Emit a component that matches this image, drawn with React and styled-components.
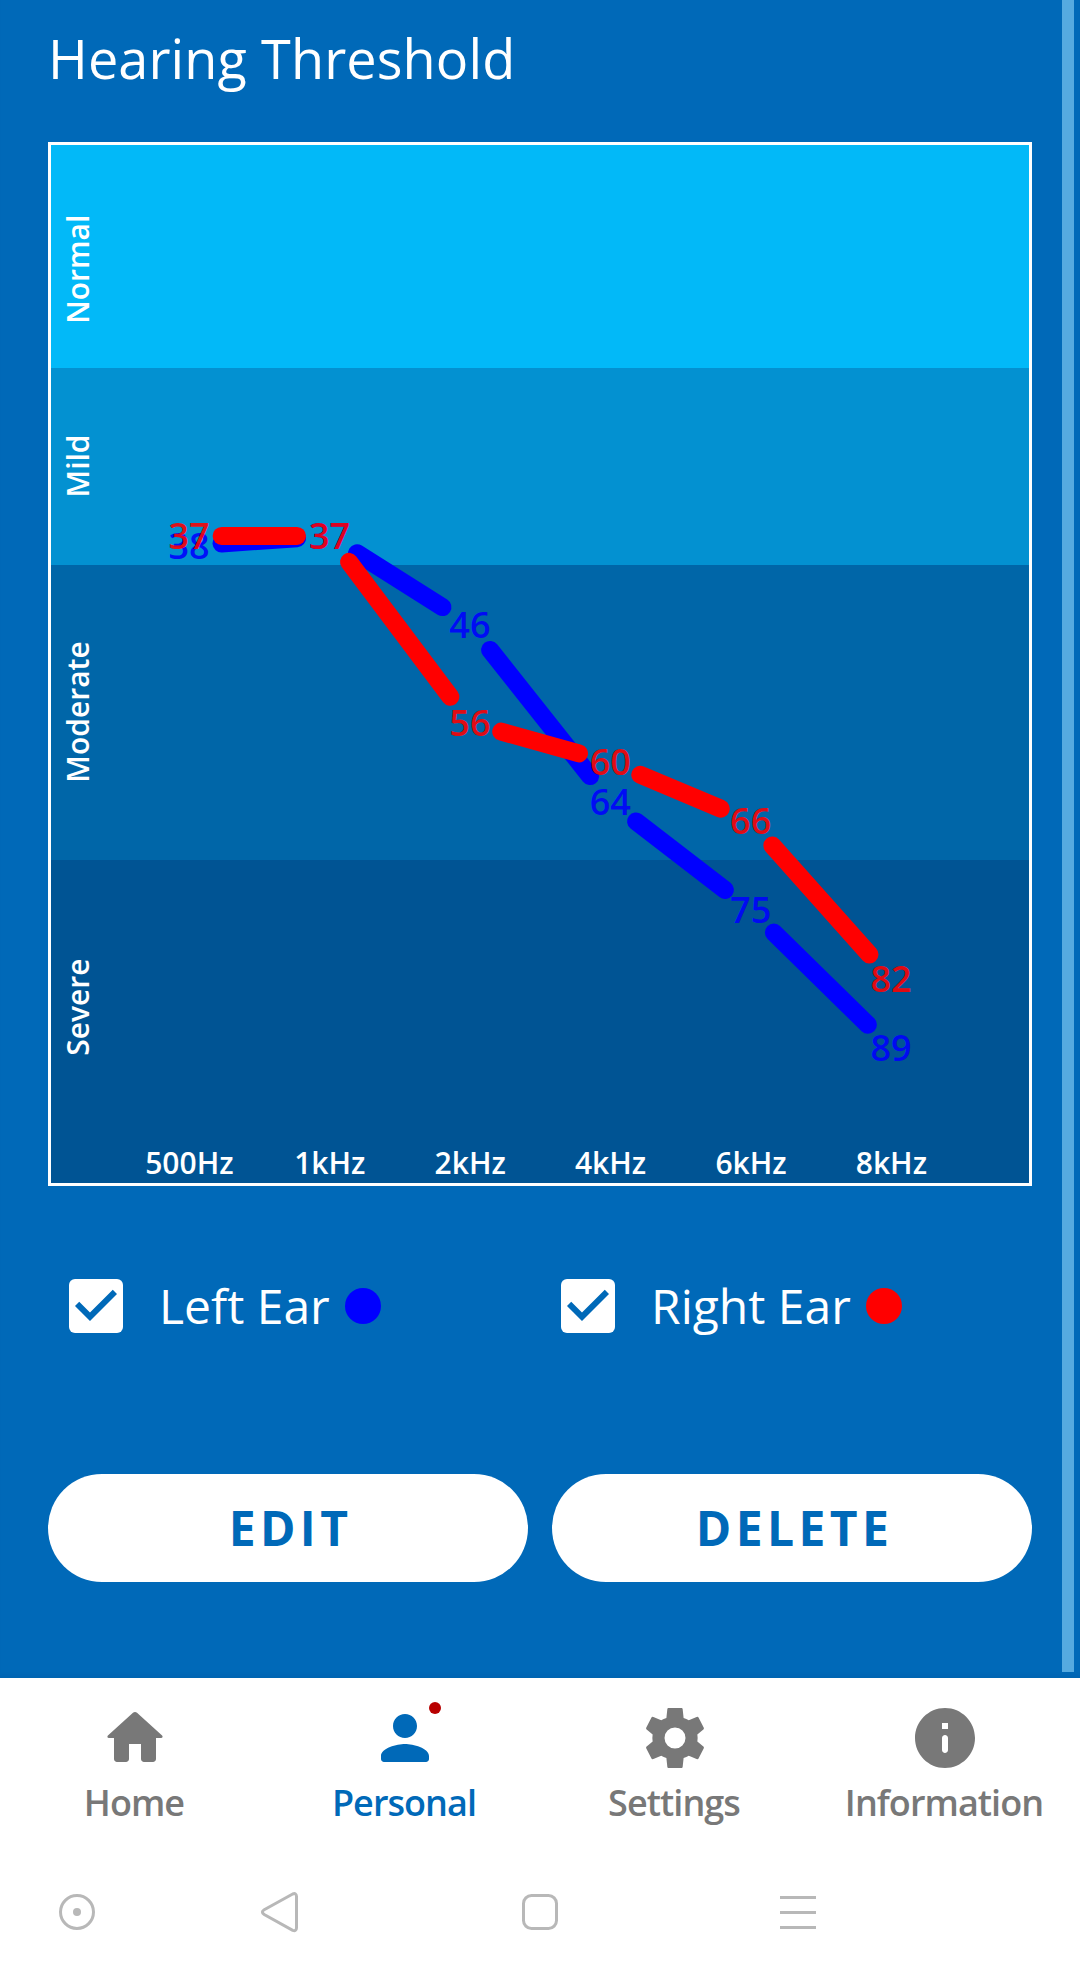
import React, { useState } from 'react';
import styled, { createGlobalStyle } from 'styled-components';

const GlobalStyle = createGlobalStyle`
    body {
        margin: 0;
        background: #ffffff;
        font-family: "Open Sans", "Noto Sans", sans-serif;
    }
`

const Screen = styled.div`
    width: 1080px;
    height: 1966px;
    display: flex;
    flex-direction: column;
    overflow: hidden;
    background-color: #ffffff;
`

const Content = styled.main`
    position: relative;
    box-sizing: border-box;
    height: 1678px;
    padding: 0 48px;
    background-color: #0069b8;
    box-shadow: inset 0 -5px 5px -4px rgba(0, 50, 100, 0.12);
`

const ScrollThumb = styled.div`
    position: absolute;
    top: 0;
    right: 6px;
    width: 12px;
    height: 1672px;
    background-color: #55aae0;
`

const Title = styled.h1`
    margin: 0;
    height: 142px;
    line-height: 116px;
    font-size: 54px;
    font-weight: 400;
    letter-spacing: 0.1px;
    color: #ffffff;
`

const ChartFrame = styled.div`
    border: 3px solid #ffffff;
    height: 1038px;
`

const ChartSvg = styled.svg`
    display: block;
    width: 978px;
    height: 1038px;
`

const AxisText = styled.text`
    font-size: 30px;
    font-weight: 600;
    fill: #ffffff;
    text-anchor: middle;
`

const ValueText = styled.text`
    font-size: 36px;
    font-weight: 600;
    text-anchor: middle;
    fill: ${(props) => props.$color};
    fill-opacity: 0.9;
`

const EarRow = styled.div`
    display: flex;
    height: 72px;
    margin: 84px 0 132px;
    padding-left: 12px;
`

const EarToggle = styled.label`
    display: flex;
    flex: 0 0 492px;
    align-items: center;
    font-size: 48px;
    line-height: 72px;
    color: #ffffff;
`

const CheckIcon = styled.svg`
    width: 72px;
    height: 72px;
    margin-right: 27px;
    cursor: pointer;
`

const EarDot = styled.span`
    width: 36px;
    height: 36px;
    margin-left: 15px;
    border-radius: 50%;
    background-color: ${(props) => props.$color};
`

const ButtonRow = styled.div`
    display: flex;
    gap: 24px;
`

const PillButton = styled.button`
    flex: 1;
    height: 108px;
    padding: 0 0 2px;
    border: none;
    border-radius: 54px;
    background-color: #ffffff;
    color: #0069b8;
    font-family: inherit;
    font-size: 48px;
    font-weight: 700;
    letter-spacing: 4.4px;
    text-indent: 5px;
`

const TabBar = styled.nav`
    display: flex;
    height: 168px;
`

const Tab = styled.a`
    flex: 1;
    display: flex;
    flex-direction: column;
    align-items: center;
    padding-top: 24px;
    font-size: 36px;
    font-weight: 600;
    line-height: 58px;
    letter-spacing: -0.95px;
    color: ${(props) => (props.$active ? '#0069b8' : '#787878')};
`

const TabIcon = styled.span`
    position: relative;
    width: 72px;
    height: 72px;
    svg {
        display: block;
        width: 72px;
        height: 72px;
        fill: currentColor;
    }
`

const Badge = styled.span`
    position: absolute;
    top: 0;
    right: 0;
    width: 12px;
    height: 12px;
    border-radius: 50%;
    background-color: #b80000;
`

const TabLabel = styled.span`
    padding-right: 2px;
    white-space: nowrap;
`

const SystemBar = styled.div`
    display: flex;
    align-items: center;
    height: 120px;
    padding: 12px 0 0 50px;
    box-sizing: border-box;
    svg {
        width: 54px;
        height: 54px;
        fill: none;
        stroke: #b8b8b8;
        stroke-width: 3;
    }
`

const SystemButton = styled.span`
    display: flex;
    margin-right: ${(props) => props.$gap}px;
`

const bands = [
    { name: 'Normal', from: -3, to: 20, color: '#02b9f8', labelAt: 10 },
    { name: 'Mild', from: 20, to: 40, color: '#0391d1', labelAt: 30 },
    { name: 'Moderate', from: 40, to: 70, color: '#0066a8', labelAt: 55 },
    { name: 'Severe', from: 70, to: 103, color: '#005494', labelAt: 85 },
]

const frequencies = ['500Hz', '1kHz', '2kHz', '4kHz', '6kHz', '8kHz'];

const ears = [
    { id: 'left', label: 'Left Ear', color: '#0000ff', values: [38, 37, 46, 64, 75, 89] },
    { id: 'right', label: 'Right Ear', color: '#ff0000', values: [37, 37, 56, 60, 66, 82] },
]

const LINE_GAP = 32.5;

const xAt = (index) => 138.1 + index * 140.4;
const yAt = (db) => 420.4 + (db - 40) * 9.84;

// 線段兩端要留空間給數字
const getSegment = (values, i) => {
    const x1 = xAt(i);
    const y1 = yAt(values[i]);
    const x2 = xAt(i + 1);
    const y2 = yAt(values[i + 1]);
    const length = Math.hypot(x2 - x1, y2 - y1);
    const dx = ((x2 - x1) / length) * LINE_GAP;
    const dy = ((y2 - y1) / length) * LINE_GAP;
    return { x1: x1 + dx, y1: y1 + dy, x2: x2 - dx, y2: y2 - dy };
}

const Series = ({ ear }) => (
    <g>
        {ear.values.slice(1).map((_, i) => (
            <line key={i} {...getSegment(ear.values, i)} stroke={ear.color} strokeWidth="18" strokeLinecap="round" />
        ))}
        {ear.values.map((value, i) => (
            <ValueText key={i} x={xAt(i)} y={yAt(value) + 13.2} $color={ear.color}>{value}</ValueText>
        ))}
    </g>
)

const ThresholdChart = ({ shown }) => (
    <ChartFrame>
        <ChartSvg viewBox="0 0 978 1038">
            {bands.map((band) => (
                <rect
                    key={band.name}
                    x="0"
                    y={Math.floor(yAt(band.from))}
                    width="978"
                    height={Math.floor(yAt(band.to)) - Math.floor(yAt(band.from))}
                    fill={band.color}
                />
            ))}
            {bands.map((band) => (
                <AxisText key={band.name} transform={`translate(37.8 ${yAt(band.labelAt) - 1}) rotate(-90)`}>
                    {band.name}
                </AxisText>
            ))}
            {frequencies.map((name, i) => (
                <AxisText key={name} x={xAt(i) + 0.3} y="1029">{name}</AxisText>
            ))}
            {ears.filter((ear) => shown[ear.id]).map((ear) => (
                <Series key={ear.id} ear={ear} />
            ))}
        </ChartSvg>
    </ChartFrame>
)

const HomeIcon = () => (
    <svg viewBox="0 0 24 24">
        <path d="M10 19v-5h4v5c0 .55.45 1 1 1h3c.55 0 1-.45 1-1v-7h1.7c.46 0 .68-.57.33-.87L12.67 3.6c-.38-.34-.96-.34-1.34 0l-8.36 7.53c-.34.3-.13.87.33.87H5v7c0 .55.45 1 1 1h3c.55 0 1-.45 1-1z" />
    </svg>
)

const PersonIcon = () => (
    <svg viewBox="0 0 24 24">
        <path d="M12 12c2.21 0 4-1.79 4-4s-1.79-4-4-4-4 1.79-4 4 1.79 4 4 4zm0 2c-2.67 0-8 1.34-8 4v1c0 .55.45 1 1 1h14c.55 0 1-.45 1-1v-1c0-2.66-5.33-4-8-4z" />
    </svg>
)

const GearIcon = () => (
    <svg viewBox="-12 -12 24 24">
        <path
            fillRule="evenodd"
            d="M-2.2-10H2.2Q2.5-10 2.55-9.7L2.87-6.7Q3.8-6.4 4.6-5.9L7.4-7.05Q7.65-7.1 7.8-6.9L9.6-3.4Q9.7-3.1 9.55-2.95L7.45-1.2Q7.65 0 7.45 1.2L9.55 2.95Q9.7 3.1 9.6 3.4L7.8 6.9Q7.65 7.1 7.4 7.05L4.6 5.9Q3.8 6.4 2.87 6.7L2.55 9.7Q2.5 10 2.2 10H-2.2Q-2.5 10-2.55 9.7L-2.87 6.7Q-3.8 6.4-4.6 5.9L-7.4 7.05Q-7.65 7.1-7.8 6.9L-9.6 3.4Q-9.7 3.1-9.55 2.95L-7.45 1.2Q-7.65 0-7.45-1.2L-9.55-2.95Q-9.7-3.1-9.6-3.4L-7.8-6.9Q-7.65-7.1-7.4-7.05L-4.6-5.9Q-3.8-6.4-2.87-6.7L-2.55-9.7Q-2.5-10-2.2-10ZM0-3.5A3.5 3.5 0 1 0 0 3.5A3.5 3.5 0 1 0 0-3.5Z"
        />
    </svg>
)

const InfoIcon = () => (
    <svg viewBox="0 0 24 24">
        <path d="M12 2C6.48 2 2 6.48 2 12s4.48 10 10 10 10-4.48 10-10S17.52 2 12 2zm0 15c-.55 0-1-.45-1-1v-4c0-.55.45-1 1-1s1 .45 1 1v4c0 .55-.45 1-1 1zm1-8h-2V7h2v2z" />
    </svg>
)

const tabs = [
    { label: 'Home', Icon: HomeIcon },
    { label: 'Personal', Icon: PersonIcon, active: true, badge: true },
    { label: 'Settings', Icon: GearIcon },
    { label: 'Information', Icon: InfoIcon },
]

const App = () => {
    const [shown, setShown] = useState({ left: true, right: true });

    const toggle = (id) => setShown({ ...shown, [id]: !shown[id] });

    return (
        <Screen>
            <GlobalStyle />
            <Content>
                <Title>Hearing Threshold</Title>
                <ThresholdChart shown={shown} />
                <EarRow>
                    {ears.map((ear) => (
                        <EarToggle key={ear.id} onClick={() => toggle(ear.id)}>
                            <CheckIcon viewBox="0 0 24 24">
                                <rect x="3" y="3" width="18" height="18" rx="2" fill="#ffffff" />
                                {shown[ear.id] && (
                                    <path fill="#0069b8" d="M10 17l-5-5 1.41-1.41L10 14.17l7.59-7.59L19 8l-9 9z" />
                                )}
                            </CheckIcon>
                            {ear.label}
                            <EarDot $color={ear.color} />
                        </EarToggle>
                    ))}
                </EarRow>
                <ButtonRow>
                    <PillButton>EDIT</PillButton>
                    <PillButton>DELETE</PillButton>
                </ButtonRow>
                <ScrollThumb />
            </Content>
            <TabBar>
                {tabs.map(({ label, Icon, active, badge }) => (
                    <Tab key={label} $active={active}>
                        <TabIcon>
                            <Icon />
                            {badge && <Badge />}
                        </TabIcon>
                        <TabLabel>{label}</TabLabel>
                    </Tab>
                ))}
            </TabBar>
            <SystemBar>
                <SystemButton $gap={149}>
                    <svg viewBox="0 0 54 54">
                        <circle cx="27" cy="27" r="16.5" />
                        <circle cx="27" cy="27" r="4" fill="#b8b8b8" stroke="none" />
                    </svg>
                </SystemButton>
                <SystemButton $gap={206}>
                    <svg viewBox="0 0 54 54">
                        <path d="M39.7 9L11.2 24.7Q7.5 27 11.2 29.5L39.7 45.3Q43.3 46.6 43.5 42.8V11.4Q43.3 7.6 39.7 9Z" />
                    </svg>
                </SystemButton>
                <SystemButton $gap={204}>
                    <svg viewBox="0 0 54 54">
                        <rect x="10.5" y="10.5" width="33" height="33" rx="8" />
                    </svg>
                </SystemButton>
                <SystemButton $gap={0}>
                    <svg viewBox="0 0 54 54">
                        <path d="M9 12.5H45M9 27.5H45M9 42.5H45" />
                    </svg>
                </SystemButton>
            </SystemBar>
        </Screen>
    );
}

export default App;
